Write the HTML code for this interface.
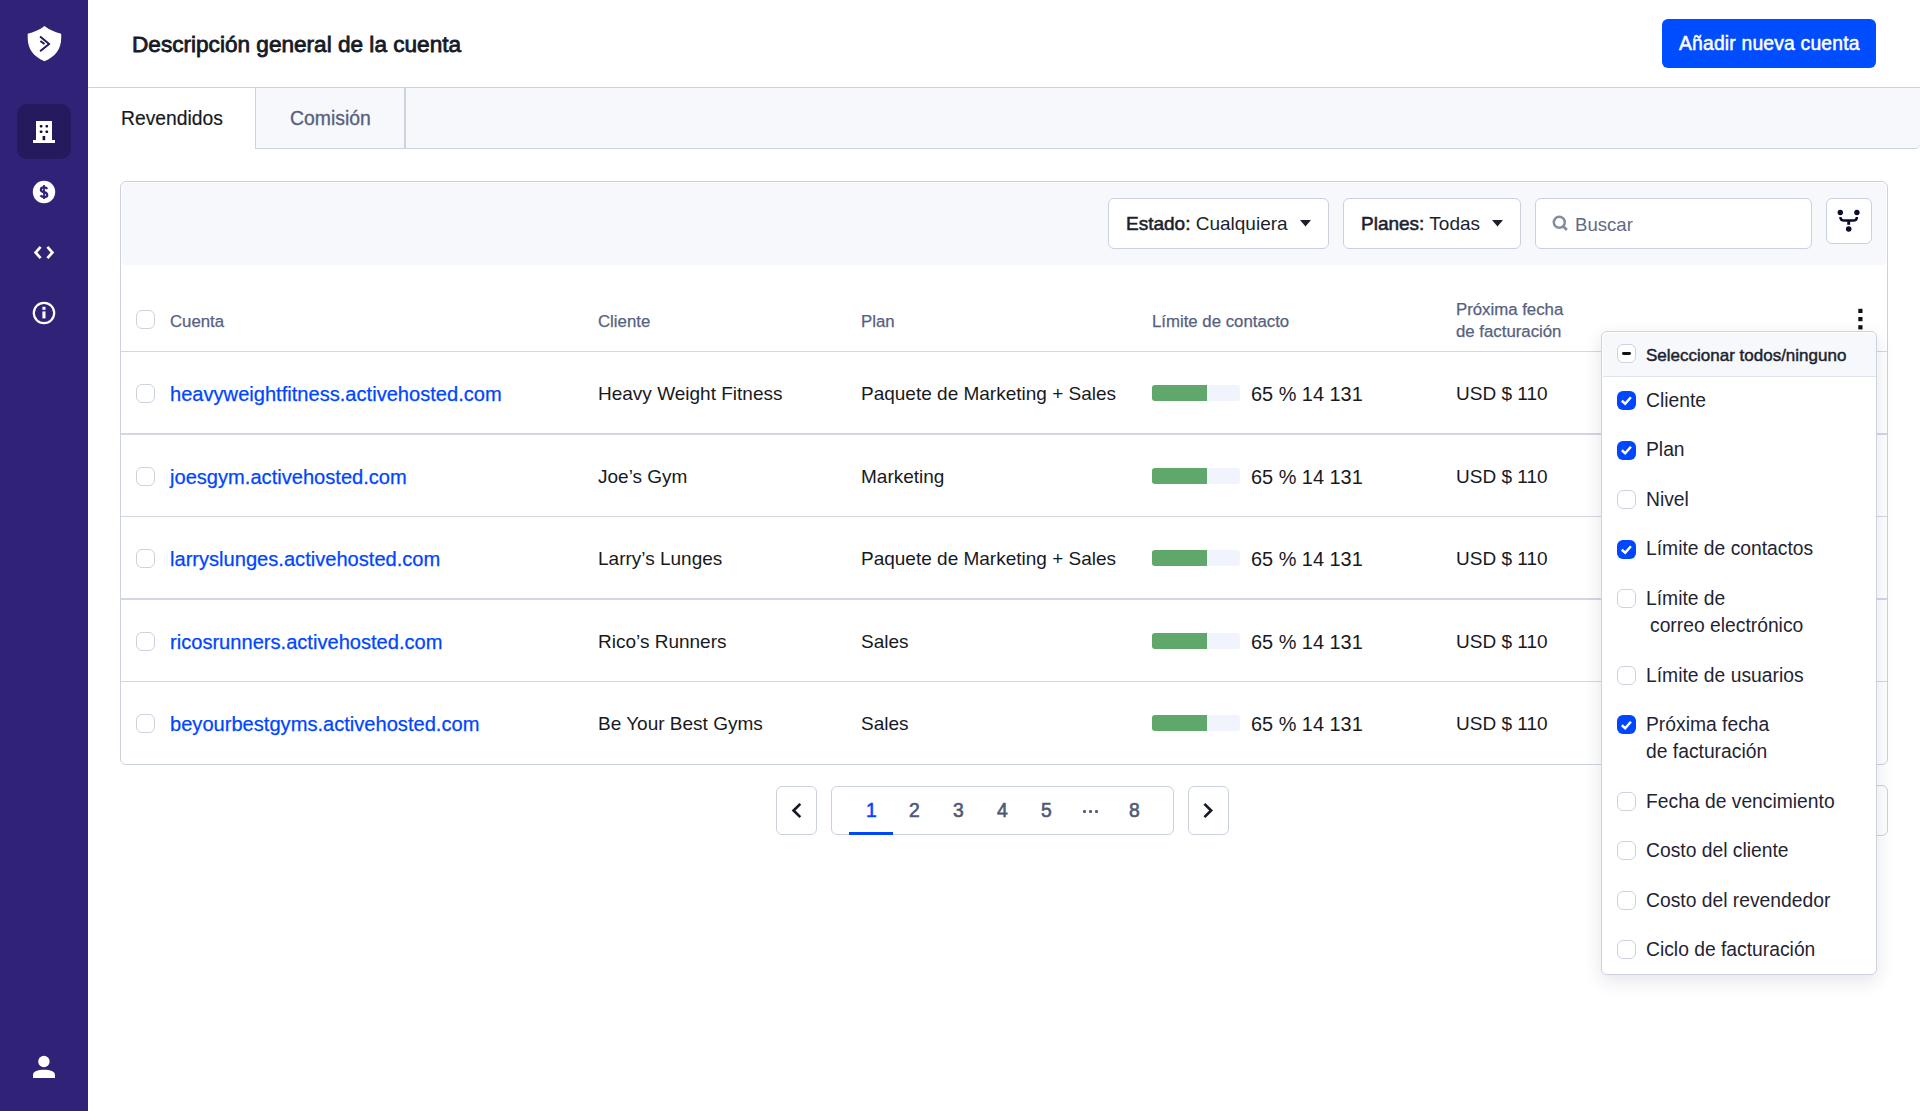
<!DOCTYPE html>
<html><head><meta charset="utf-8">
<style>
*{box-sizing:border-box}
html,body{margin:0;padding:0;width:1920px;height:1111px;overflow:hidden;background:#fff;font-family:"Liberation Sans",sans-serif;color:#1b1f2e}
.a{position:absolute}
.t{position:absolute;line-height:0;white-space:nowrap}
#side{left:0;top:0;width:88px;height:1111px;background:#2f2277}
.bd{border:1.5px solid #ccd1e0}
.cb{position:absolute;width:19px;height:19px;border:1.5px solid #cdd2e1;border-radius:6px;background:#fff}
.cbk{position:absolute;width:19px;height:19px;border-radius:6px;background:#0046ff}
.hd{font-size:16.8px;color:#56617f;-webkit-text-stroke:0.25px #56617f}
.bx{font-size:19px;color:#18191e}
.lk{font-size:20.1px;color:#0046ff;-webkit-text-stroke:0.25px #0046ff}
.bar{position:absolute;width:88px;height:16.3px;border-radius:3px;background:#f1f4fd;overflow:hidden}
.bar i{position:absolute;left:0;top:0;bottom:0;width:55px;background:#60a76b}
.sep{position:absolute;left:121px;width:1766px;height:1.5px;background:#d3d7e4}
.dd{font-size:19.3px;color:#1f2433}
</style></head><body>

<!-- Sidebar -->
<div id="side" class="a"></div>
<div class="a" style="left:17px;top:104px;width:54px;height:55px;border-radius:10px;background:#241a5d"></div>
<svg class="a" style="left:0;top:0" width="88" height="1111" viewBox="0 0 88 1111">
  <!-- shield logo -->
  <path d="M44.5 26 C39.5 29.8 33.5 32.6 27.7 33.8 L27.7 38 C27.7 49.5 34 56.8 44.5 61.2 C55 56.8 61.2 49.5 61.2 38 L61.2 33.8 C55.5 32.6 49.5 29.8 44.5 26 Z" fill="#fff"/>
  <path d="M40.1 36.6 L49.1 43.9 L40.1 51.2" fill="none" stroke="#1e1660" stroke-width="1.9"/>
  <path d="M40.4 40.9 L44.5 44.1" fill="none" stroke="#1e1660" stroke-width="1.9"/>
  <!-- building -->
  <rect x="36" y="121" width="16" height="20" fill="#fff"/>
  <rect x="33" y="140" width="22" height="3" fill="#fff"/>
  <rect x="39.8" y="125" width="2.6" height="2.6" rx="0.8" fill="#130d3e"/>
  <rect x="45.5" y="125" width="2.6" height="2.6" rx="0.8" fill="#130d3e"/>
  <rect x="39.8" y="130.5" width="2.6" height="2.6" rx="0.8" fill="#130d3e"/>
  <rect x="45.5" y="130.5" width="2.6" height="2.6" rx="0.8" fill="#130d3e"/>
  <rect x="42.6" y="136" width="2.6" height="4.2" fill="#130d3e"/>
  <!-- dollar -->
  <circle cx="44" cy="192" r="11.2" fill="#fff"/>
  <rect x="43.1" y="185" width="1.8" height="14" fill="#2f2277"/>
  <path d="M47.3 188.9 C46.6 187.9 45.4 187.4 44 187.4 C42 187.4 40.9 188.4 40.9 189.7 C40.9 191.3 42.4 191.8 44 192.2 C45.7 192.6 47.2 193.2 47.2 194.9 C47.2 196.3 45.9 197.0 44 197.0 C42.4 197.0 41.2 196.4 40.5 195.4" fill="none" stroke="#2f2277" stroke-width="2.3"/>
  <!-- code -->
  <path d="M40.6 246.8 L35.6 252.5 L40.6 258.2" fill="none" stroke="#fff" stroke-width="2.7"/>
  <path d="M47.4 246.8 L52.4 252.5 L47.4 258.2" fill="none" stroke="#fff" stroke-width="2.7"/>
  <!-- info -->
  <circle cx="44" cy="313" r="10.2" fill="none" stroke="#fff" stroke-width="2.2"/>
  <rect x="42.4" y="306.8" width="3.1" height="3" fill="#fff"/>
  <rect x="42.4" y="311.4" width="3.1" height="7" fill="#fff"/>
  <!-- user -->
  <circle cx="43.9" cy="1061.5" r="5.7" fill="#fff"/>
  <path d="M33 1078 L33 1075 C33 1071.4 37.8 1069.8 44 1069.8 C50.2 1069.8 55 1071.4 55 1075 L55 1078 Z" fill="#fff"/>
</svg>

<!-- Header -->
<div class="t" style="left:132px;top:44.6px;font-size:22.6px;color:#161a27;-webkit-text-stroke:0.8px #161a27">Descripción general de la cuenta</div>
<div class="a" style="left:1662px;top:18.5px;width:214px;height:49px;border-radius:6px;background:#004cff"></div>
<div class="t" style="left:1679px;top:43.6px;font-size:19.3px;letter-spacing:0.2px;color:#fff;-webkit-text-stroke:0.5px #fff">Añadir nueva cuenta</div>
<div class="a" style="left:88px;top:86.5px;width:1832px;height:1.5px;background:#cdd2e0"></div>

<!-- Tabs -->
<div class="a" style="left:255px;top:88px;width:1665px;height:61px;background:#f6f8fc;border-left:1.5px solid #cdd2e0;border-bottom:1.5px solid #cdd2e0;border-bottom-right-radius:5px"></div>
<div class="a" style="left:404px;top:88px;width:1.5px;height:60px;background:#cdd2e0"></div>
<div class="t" style="left:121px;top:118.5px;font-size:19.3px;color:#18191e;-webkit-text-stroke:0.2px #18191e">Revendidos</div>
<div class="t" style="left:290px;top:118.3px;font-size:19.4px;color:#56607c;-webkit-text-stroke:0.3px #56607c">Comisión</div>

<!-- Table card -->
<div class="a bd" style="left:120px;top:181px;width:1768px;height:584px;border-radius:6px;background:#fff"></div>
<div class="a" style="left:122px;top:183px;width:1764px;height:82px;background:#f7f8fc;border-radius:4px 4px 4px 4px"></div>

<!-- toolbar controls -->
<div class="a bd" style="left:1108px;top:198px;width:221px;height:51px;border-radius:6px;background:#fff"></div>
<div class="t" style="left:1126px;top:224px;font-size:19px;color:#1b1f2e"><span style="-webkit-text-stroke:0.55px #1b1f2e">Estado:</span> Cualquiera</div>
<svg class="a" style="left:1300px;top:220px" width="12" height="7"><path d="M0 0 L11 0 L5.5 6.5 Z" fill="#1b1f2e"/></svg>

<div class="a bd" style="left:1343px;top:198px;width:178px;height:51px;border-radius:6px;background:#fff"></div>
<div class="t" style="left:1361px;top:224px;font-size:19px;color:#1b1f2e"><span style="-webkit-text-stroke:0.55px #1b1f2e">Planes:</span> Todas</div>
<svg class="a" style="left:1492px;top:220px" width="12" height="7"><path d="M0 0 L11 0 L5.5 6.5 Z" fill="#1b1f2e"/></svg>

<div class="a bd" style="left:1535px;top:198px;width:277px;height:51px;border-radius:6px;background:#fff"></div>
<svg class="a" style="left:1551px;top:214px" width="19" height="19" viewBox="0 0 19 19"><circle cx="8.3" cy="8.2" r="5.5" fill="none" stroke="#838ba5" stroke-width="2.5"/><path d="M12.6 12.6 L15.8 16" stroke="#838ba5" stroke-width="2.8" stroke-linecap="butt"/></svg>
<div class="t" style="left:1575px;top:224.5px;font-size:18.6px;color:#5f6986">Buscar</div>

<div class="a bd" style="left:1826px;top:198px;width:46px;height:46px;border-radius:6px;background:#fff"></div>
<svg class="a" style="left:1826px;top:198px" width="46" height="46" viewBox="0 0 46 46">
  <circle cx="14.3" cy="14.5" r="2.7" fill="#0b0b2e"/>
  <circle cx="30.9" cy="14.5" r="2.7" fill="#0b0b2e"/>
  <circle cx="22.7" cy="31" r="2.8" fill="#0b0b2e"/>
  <path d="M14.4 19 C14.4 21.5 15.6 22.6 18.4 22.6 L26.9 22.6 C29.7 22.6 30.9 21.5 30.9 19" fill="none" stroke="#0b0b2e" stroke-width="2.5"/>
  <path d="M22.7 23 L22.7 26.8" stroke="#0b0b2e" stroke-width="2.9"/>
</svg>

<!-- table header -->
<div class="cb" style="left:136px;top:310px"></div>
<div class="t hd" style="left:170px;top:321.8px">Cuenta</div>
<div class="t hd" style="left:598px;top:321.8px">Cliente</div>
<div class="t hd" style="left:861px;top:321.8px">Plan</div>
<div class="t hd" style="left:1152px;top:321.8px">Límite de contacto</div>
<div class="t hd" style="left:1456px;top:310.3px">Próxima fecha</div>
<div class="t hd" style="left:1456px;top:332.3px">de facturación</div>
<svg class="a" style="left:1857px;top:307px" width="8" height="24"><rect x="1.3" y="1.8" width="4.2" height="4.2" fill="#111"/><rect x="1.3" y="10" width="4.2" height="4.2" fill="#111"/><rect x="1.3" y="18.2" width="4.2" height="4.2" fill="#111"/></svg>

<div class="sep" style="top:350.7px"></div>
<div class="sep" style="top:433.2px"></div>
<div class="sep" style="top:515.7px"></div>
<div class="sep" style="top:598.2px"></div>
<div class="sep" style="top:680.7px"></div>

<!-- rows -->
<div class="cb" style="left:136px;top:384px"></div>
<div class="t lk" style="left:170px;top:394.2px">heavyweightfitness.activehosted.com</div>
<div class="t bx" style="left:598px;top:394.2px">Heavy Weight Fitness</div>
<div class="t bx" style="left:861px;top:394.2px">Paquete de Marketing + Sales</div>
<div class="bar" style="left:1152px;top:385.0px"><i></i></div>
<div class="t bx" style="left:1251px;top:394.2px;font-size:19.9px">65 % 14 131</div>
<div class="t bx" style="left:1456px;top:394.2px">USD $ 110</div>

<div class="cb" style="left:136px;top:466.5px"></div>
<div class="t lk" style="left:170px;top:476.7px">joesgym.activehosted.com</div>
<div class="t bx" style="left:598px;top:476.7px">Joe’s Gym</div>
<div class="t bx" style="left:861px;top:476.7px">Marketing</div>
<div class="bar" style="left:1152px;top:467.5px"><i></i></div>
<div class="t bx" style="left:1251px;top:476.7px;font-size:19.9px">65 % 14 131</div>
<div class="t bx" style="left:1456px;top:476.7px">USD $ 110</div>

<div class="cb" style="left:136px;top:549px"></div>
<div class="t lk" style="left:170px;top:559.2px">larryslunges.activehosted.com</div>
<div class="t bx" style="left:598px;top:559.2px">Larry’s Lunges</div>
<div class="t bx" style="left:861px;top:559.2px">Paquete de Marketing + Sales</div>
<div class="bar" style="left:1152px;top:550.0px"><i></i></div>
<div class="t bx" style="left:1251px;top:559.2px;font-size:19.9px">65 % 14 131</div>
<div class="t bx" style="left:1456px;top:559.2px">USD $ 110</div>

<div class="cb" style="left:136px;top:631.5px"></div>
<div class="t lk" style="left:170px;top:641.7px">ricosrunners.activehosted.com</div>
<div class="t bx" style="left:598px;top:641.7px">Rico’s Runners</div>
<div class="t bx" style="left:861px;top:641.7px">Sales</div>
<div class="bar" style="left:1152px;top:632.5px"><i></i></div>
<div class="t bx" style="left:1251px;top:641.7px;font-size:19.9px">65 % 14 131</div>
<div class="t bx" style="left:1456px;top:641.7px">USD $ 110</div>

<div class="cb" style="left:136px;top:713.5px"></div>
<div class="t lk" style="left:170px;top:724.2px">beyourbestgyms.activehosted.com</div>
<div class="t bx" style="left:598px;top:724.2px">Be Your Best Gyms</div>
<div class="t bx" style="left:861px;top:724.2px">Sales</div>
<div class="bar" style="left:1152px;top:715.0px"><i></i></div>
<div class="t bx" style="left:1251px;top:724.2px;font-size:19.9px">65 % 14 131</div>
<div class="t bx" style="left:1456px;top:724.2px">USD $ 110</div>

<!-- pagination -->
<div class="a bd" style="left:776px;top:786px;width:41px;height:49px;border-radius:6px;background:#fff"></div>
<svg class="a" style="left:776px;top:786px" width="41" height="49"><path d="M24.3 17.9 L17.6 24.5 L24.3 31.1" fill="none" stroke="#161a27" stroke-width="2.7"/></svg>
<div class="a bd" style="left:831px;top:786px;width:343px;height:49px;border-radius:6px;background:#fff"></div>
<div class="a" style="left:849px;top:832px;width:44px;height:3px;background:#0046ff"></div>
<div class="t" style="left:866px;top:811px;font-size:19.3px;color:#0046ff;-webkit-text-stroke:0.6px #0046ff">1</div>
<div class="t" style="left:909px;top:811px;font-size:19.3px;color:#4f5975;-webkit-text-stroke:0.6px #4f5975">2</div>
<div class="t" style="left:953px;top:811px;font-size:19.3px;color:#4f5975;-webkit-text-stroke:0.6px #4f5975">3</div>
<div class="t" style="left:997px;top:811px;font-size:19.3px;color:#4f5975;-webkit-text-stroke:0.6px #4f5975">4</div>
<div class="t" style="left:1041px;top:811px;font-size:19.3px;color:#4f5975;-webkit-text-stroke:0.6px #4f5975">5</div>
<div class="a" style="left:1083px;top:810.3px;width:3px;height:3px;background:#56607c;border-radius:1px"></div><div class="a" style="left:1089px;top:810.3px;width:3px;height:3px;background:#56607c;border-radius:1px"></div><div class="a" style="left:1095px;top:810.3px;width:3px;height:3px;background:#56607c;border-radius:1px"></div>
<div class="t" style="left:1129px;top:811px;font-size:19.3px;color:#4f5975;-webkit-text-stroke:0.6px #4f5975">8</div>
<div class="a bd" style="left:1188px;top:786px;width:41px;height:49px;border-radius:6px;background:#fff"></div>
<svg class="a" style="left:1188px;top:786px" width="41" height="49"><path d="M16.4 17.9 L23.1 24.5 L16.4 31.1" fill="none" stroke="#161a27" stroke-width="2.7"/></svg>

<!-- hidden per-page select -->
<div class="a bd" style="left:1760px;top:785px;width:128px;height:51px;border-radius:6px;background:#fff"></div>

<!-- Dropdown -->
<div class="a" style="left:1601px;top:331px;width:276px;height:644px;border:1.5px solid #cdd2e0;border-radius:6px;background:#fff;box-shadow:0 6px 18px rgba(30,40,80,0.12)"></div>
<div class="a" style="left:1602.5px;top:332.5px;width:273px;height:44px;border-radius:5px 5px 0 0;background:#f6f8fc;border-bottom:1px solid #dfe3ec"></div>
<div class="cb" style="left:1617px;top:344px"></div>
<div class="a" style="left:1621.5px;top:352.2px;width:9px;height:2.8px;border-radius:1.4px;background:#111"></div>
<div class="t" style="left:1646px;top:355.7px;font-size:17px;color:#1b1f2e;-webkit-text-stroke:0.45px #1b1f2e">Seleccionar todos/ninguno</div>

<div class="cbk" style="left:1617px;top:391px"></div>
<div class="t dd" style="left:1646px;top:400.5px">Cliente</div>
<div class="cbk" style="left:1617px;top:440.5px"></div>
<div class="t dd" style="left:1646px;top:450px">Plan</div>
<div class="cb" style="left:1617px;top:490px"></div>
<div class="t dd" style="left:1646px;top:499.5px">Nivel</div>
<div class="cbk" style="left:1617px;top:539.5px"></div>
<div class="t dd" style="left:1646px;top:549px">Límite de contactos</div>
<div class="cb" style="left:1617px;top:589px"></div>
<div class="t dd" style="left:1646px;top:598.5px">Límite de</div>
<div class="t dd" style="left:1650px;top:626px">correo electrónico</div>
<div class="cb" style="left:1617px;top:666px"></div>
<div class="t dd" style="left:1646px;top:675.5px">Límite de usuarios</div>
<div class="cbk" style="left:1617px;top:715px"></div>
<div class="t dd" style="left:1646px;top:724.5px">Próxima fecha</div>
<div class="t dd" style="left:1646px;top:752px">de facturación</div>
<div class="cb" style="left:1617px;top:792px"></div>
<div class="t dd" style="left:1646px;top:801.5px">Fecha de vencimiento</div>
<div class="cb" style="left:1617px;top:841px"></div>
<div class="t dd" style="left:1646px;top:851px">Costo del cliente</div>
<div class="cb" style="left:1617px;top:890.5px"></div>
<div class="t dd" style="left:1646px;top:900.5px">Costo del revendedor</div>
<div class="cb" style="left:1617px;top:940px"></div>
<div class="t dd" style="left:1646px;top:950px">Ciclo de facturación</div>
<svg class="a" style="left:1617px;top:0" width="19" height="1111">
  <path d="M4.8 400.8 L8.2 403.8 L13.9 397.2" fill="none" stroke="#fff" stroke-width="2.5"/>
  <path d="M4.8 450.3 L8.2 453.3 L13.9 446.7" fill="none" stroke="#fff" stroke-width="2.5"/>
  <path d="M4.8 549.8 L8.2 552.8 L13.9 546.2" fill="none" stroke="#fff" stroke-width="2.5"/>
  <path d="M4.8 725.3 L8.2 728.3 L13.9 721.7" fill="none" stroke="#fff" stroke-width="2.5"/>
</svg>

</body></html>
